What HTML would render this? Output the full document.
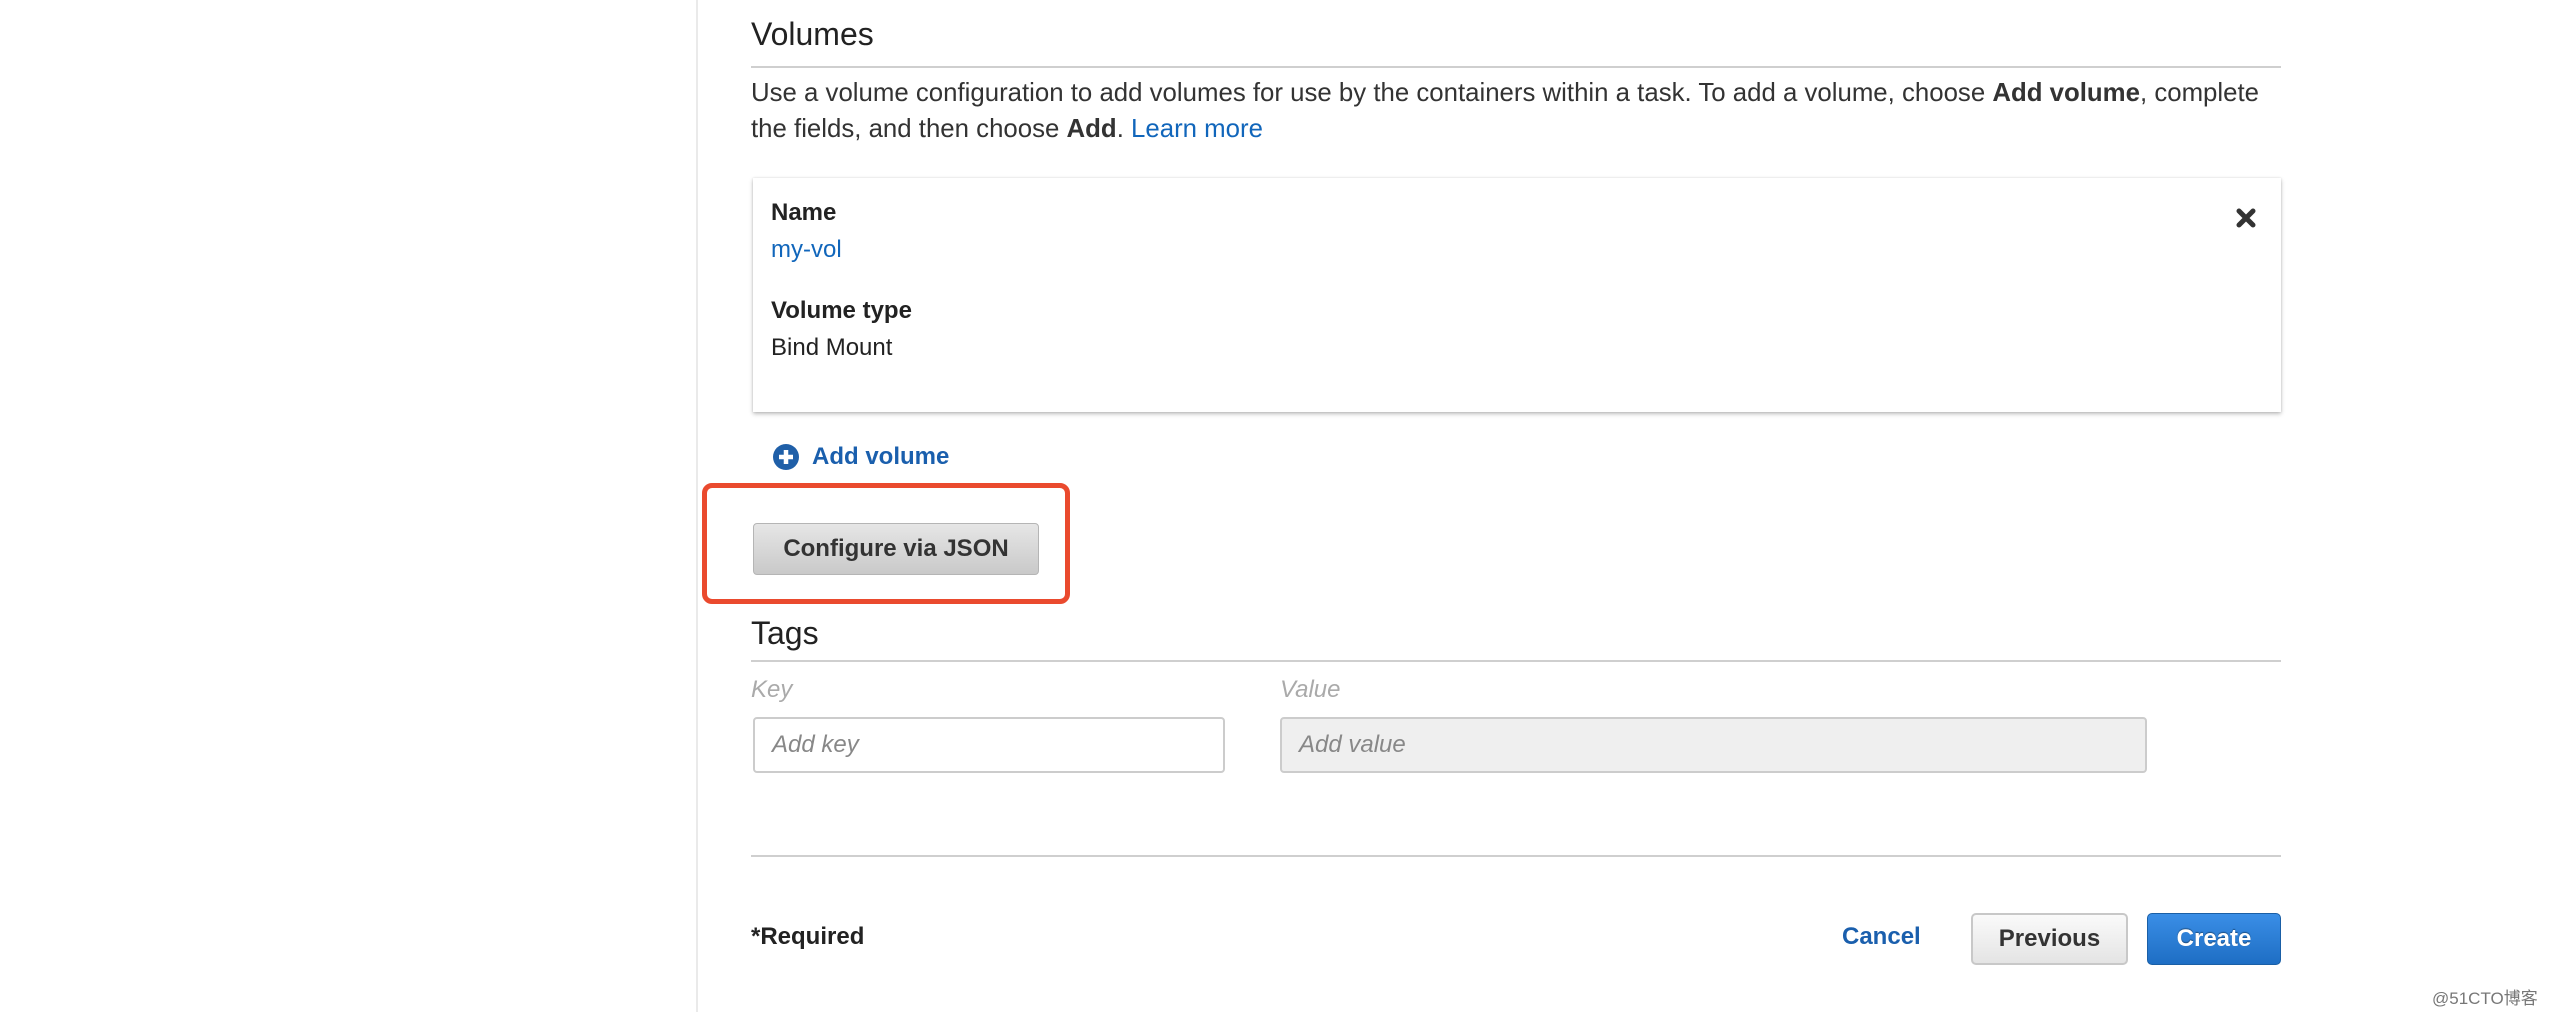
<!DOCTYPE html>
<html><head><meta charset="utf-8"><style>
*{margin:0;padding:0;box-sizing:border-box}
body{width:2560px;height:1012px;background:#fff;position:relative;overflow:hidden;font-family:"Liberation Sans",Arial,sans-serif;color:#333}
.a{position:absolute}
.line{position:absolute;height:2px;background:#cfcfcf}
.b{font-weight:bold}
.link{color:#1166bb}
</style></head><body>
<div class="a" style="left:696px;top:0;width:2px;height:1012px;background:#eaeaea"></div>

<div class="a" style="left:751px;top:16px;font-size:32px;color:#222">Volumes</div>
<div class="line" style="left:751px;top:66px;width:1530px"></div>
<div class="a" style="left:751px;top:75px;width:1535px;font-size:25.8px;line-height:36px;color:#333">Use a volume configuration to add volumes for use by the containers within a task. To add a volume, choose <b>Add volume</b>, complete the fields, and then choose <b>Add</b>. <span class="link">Learn more</span></div>

<div class="a" style="left:753px;top:178px;width:1528px;height:234px;background:#fff;box-shadow:0 2px 4px rgba(0,0,0,0.25),0 0 2px rgba(0,0,0,0.12)"></div>
<div class="a b" style="left:771px;top:199px;font-size:24px;color:#222">Name</div>
<div class="a link" style="left:771px;top:236px;font-size:24px">my-vol</div>
<div class="a b" style="left:771px;top:297px;font-size:24px;color:#222">Volume type</div>
<div class="a" style="left:771px;top:334px;font-size:24px;color:#222">Bind Mount</div>
<svg class="a" style="left:2235px;top:207px" width="22" height="22" viewBox="0 0 22 22"><path d="M4 4L18 18M18 4L4 18" stroke="#333" stroke-width="5" stroke-linecap="round"/></svg>

<svg class="a" style="left:773px;top:444px" width="26" height="26" viewBox="0 0 26 26"><circle cx="13" cy="13" r="13" fill="#1f5fa8"/><path d="M13 6v14M6 13h14" stroke="#fff" stroke-width="4.5"/></svg>
<div class="a b link" style="left:812px;top:443px;font-size:24px;color:#1a5fad">Add volume</div>

<div class="a" style="left:702px;top:483px;width:368px;height:121px;border:5px solid #ea4a2e;border-radius:10px"></div>
<div class="a b" style="left:753px;top:523px;width:286px;height:52px;border:1px solid #b5b5b5;border-radius:4px;background:linear-gradient(#e6e6e6,#c9c9c9);font-size:24px;color:#333;text-align:center;line-height:50px">Configure via JSON</div>

<div class="a" style="left:751px;top:615px;font-size:32px;color:#222">Tags</div>
<div class="line" style="left:751px;top:660px;width:1530px"></div>
<div class="a" style="left:751px;top:676px;font-size:24px;font-style:italic;color:#aaa">Key</div>
<div class="a" style="left:1280px;top:676px;font-size:24px;font-style:italic;color:#aaa">Value</div>
<div class="a" style="left:753px;top:717px;width:472px;height:56px;border:2px solid #ccc;border-radius:4px;background:#fff;font-size:24px;font-style:italic;color:#888;line-height:52px;padding-left:17px">Add key</div>
<div class="a" style="left:1280px;top:717px;width:867px;height:56px;border:2px solid #ccc;border-radius:4px;background:#efefef;font-size:24px;font-style:italic;color:#888;line-height:52px;padding-left:17px">Add value</div>

<div class="line" style="left:751px;top:855px;width:1530px"></div>
<div class="a b" style="left:751px;top:923px;font-size:24px;color:#222">*Required</div>

<div class="a b" style="left:1842px;top:923px;font-size:24px;color:#1a5fad">Cancel</div>
<div class="a b" style="left:1971px;top:913px;width:157px;height:52px;border:2px solid #c8c8c8;border-radius:5px;background:linear-gradient(#fafafa,#e4e4e4);font-size:24px;color:#333;text-align:center;line-height:48px">Previous</div>
<div class="a b" style="left:2147px;top:913px;width:134px;height:52px;border:1px solid #1a5fa6;border-radius:5px;background:linear-gradient(#3a8ee6,#1e6ec4);font-size:24px;color:#fff;text-align:center;line-height:50px;text-shadow:0 -1px 1px rgba(0,0,0,0.4)">Create</div>

<div class="a" style="left:2432px;top:984px;font-size:17px;color:#777;font-family:'Liberation Sans','Noto Sans CJK SC',sans-serif">@51CTO博客</div>
</body></html>
